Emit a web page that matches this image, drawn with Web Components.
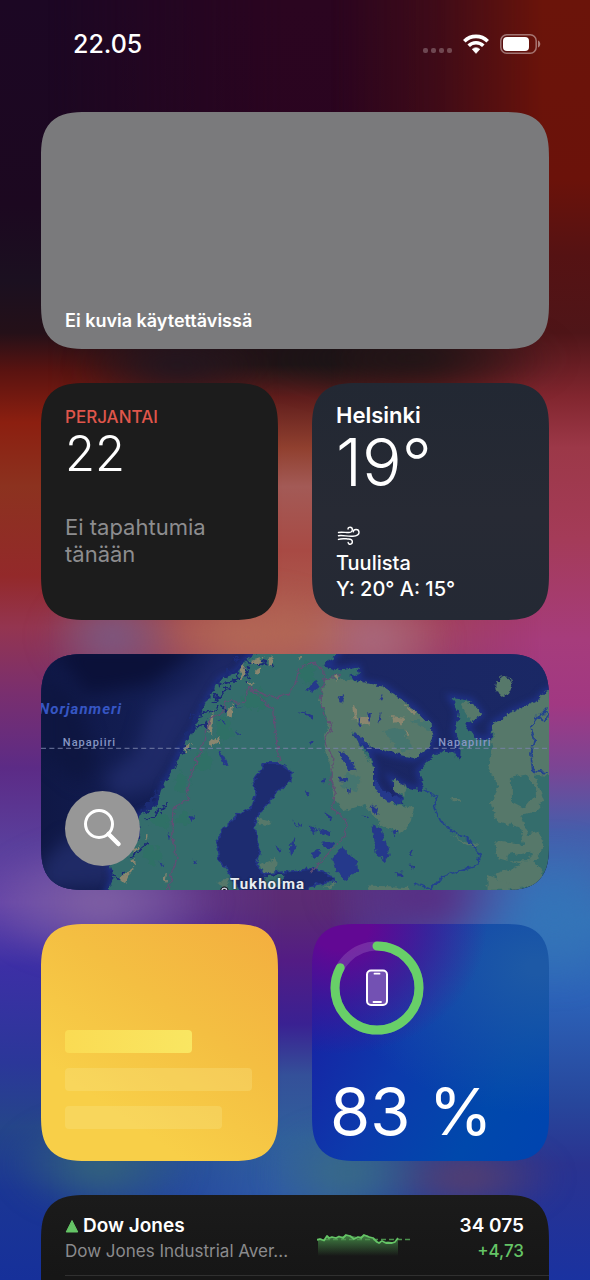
<!DOCTYPE html>
<html lang="fi">
<head>
<meta charset="utf-8">
<meta name="viewport" content="width=device-width, initial-scale=1">
<title>Widgetit</title>
<style>
  html, body { margin: 0; min-height: 100%; }
  body { font-family: Inter, "Liberation Sans", sans-serif; color: #fff; background: #1a0a24; }
</style>
</head>
<body>
<today-screen>
  <status-bar slot="status" time="22.05"></status-bar>
  <photos-widget wide>Ei kuvia käytettävissä</photos-widget>
  <calendar-widget day="perjantai" date="22">Ei tapahtumia tänään</calendar-widget>
  <weather-widget city="Helsinki" temp="19°" sky="Tuulista" range="Y: 20° A: 15°"></weather-widget>
  <map-widget wide></map-widget>
  <notes-widget></notes-widget>
  <battery-widget level="83"></battery-widget>
  <stocks-widget wide last></stocks-widget>
</today-screen>

<script>
const define = (name, render) => customElements.define(name, class extends HTMLElement {
  connectedCallback() {
    if (this.shadowRoot) return;
    this.attachShadow({ mode: 'open' }).innerHTML = render(this);
  }
});

define('today-screen', () => `
  <style>
    :host { display: flex; flex-direction: column; min-height: 100vh; position: relative; overflow: hidden; isolation: isolate; }
    .wall, .wall div { position: absolute; inset: 0; }
    .wall { z-index: -1; overflow: hidden;
      background: linear-gradient(#1c0724, #1c0820 16%, #1b1020 22%, #241018 26%, #5a1310 29%, #8c1f10 33%, #8c321f 38%, #93292a 45%, #943550 49%, #7a2f6e 54%, #5c2b86 60%, #5a3f9c 66%, #6746a8 70.5%, #3c2fa5 75.5%, #2b3799 83%, #25458a 88%, #1b3694 93%, #16309a); }
    .mid { background: linear-gradient(#2b0520, #2a0420 18%, #1e1016 26%, #1e1416 28.5%, #5f1d1c 31%, #90402f 35%, #a35a56 38%, #a84a44 43%, #b06254 49.5%, #983f70 56%, #5f2c74 68%, #5a2b74 71%, #531c84 75%, #3a2192 80%, #345099 84%, #30609c 89%, #2f5ba5 93%, #1d369c);
      -webkit-mask: linear-gradient(90deg, transparent 8%, #000 48%, #000 56%, transparent 90%); mask: linear-gradient(90deg, transparent 8%, #000 48%, #000 56%, transparent 90%); }
    .right { background: linear-gradient(#6b140a, #6b120a 14%, #551213 20%, #4f1518 26%, #82262f 31%, #9c3848 35%, #a43b58 42%, #a63c7c 50%, #a13882 55%, #7b4594 60%, #455eac 65%, #3474b8 72%, #2c62b8 78%, #27479c 86%, #2a3390 91%, #1a32a0);
      -webkit-mask: linear-gradient(90deg, transparent 56%, #0006 74%, #000 92%); mask: linear-gradient(90deg, transparent 56%, #0006 74%, #000 92%); }
    .wall .glow { filter: blur(12px); background:
      radial-gradient(ellipse 17% 3% at 30% 28.6%, #1f1722, #1f172200),
      radial-gradient(ellipse 26% 3.4% at 70% 28%, #1b1517, #1b151700),
      radial-gradient(ellipse 12% 4% at 19% 49.7%, #775a86, #775a8600),
      radial-gradient(ellipse 18% 4% at 42% 49.8%, #b36856, #b3685600),
      radial-gradient(ellipse 13% 4% at 63% 50%, #a86a80, #a86a8000),
      radial-gradient(ellipse 20% 5% at 17% 70.5%, #8062a4, #8062a400),
      radial-gradient(ellipse 18% 6% at 94% 71.5%, #3474b8, #3474b800),
      radial-gradient(ellipse 18% 4% at 72% 70%, #582a80, #582a8000),
      radial-gradient(ellipse 16% 4% at 17% 91%, #35667a, #35667a00),
      radial-gradient(ellipse 14% 4% at 59% 91.6%, #3a6c84, #3a6c8400),
      radial-gradient(ellipse 16% 3% at 79% 92%, #5c3f6a, #5c3f6a00); }
    main { display: grid; grid-template-columns: 1fr 1fr; grid-template-rows: auto auto auto auto 1fr; gap: 34px; padding: 0 41px; flex: 1; }
    ::slotted([wide]) { grid-column: 1 / -1; aspect-ratio: 508 / 237; }
    ::slotted(map-widget[wide]) { aspect-ratio: 508 / 236; }
    ::slotted([wide][last]) { aspect-ratio: auto; }
  </style>
  <div class="wall"><div class="mid"></div><div class="right"></div><div class="glow"></div></div>
  <slot name="status"></slot>
  <main><slot></slot></main>
`);

const card = `
  :host { display: flex; flex-direction: column; box-sizing: border-box; min-width: 0; border-radius: 38px; overflow: hidden; position: relative; aspect-ratio: 1; }
  @supports (corner-shape: superellipse(1.4)) { :host { border-radius: 46px; corner-shape: superellipse(1.5); } }
  p { margin: 0; }
`;

define('status-bar', el => `
  <style>
    :host { display: flex; align-items: center; justify-content: space-between; box-sizing: border-box; height: 112px; padding: 0 49px 24px 73px; }
    time { font-size: 25px; font-weight: 500; line-height: 32px; }
    .icons { display: flex; align-items: center; gap: 11px; }
    svg { display: block; }
  </style>
  <time>${el.getAttribute('time')}</time>
  <div class="icons">
    <svg width="30" height="20" viewBox="0 0 30 20" fill="#fff" fill-opacity=".25"><rect x="1" y="14" width="5" height="5" rx="2"/><rect x="9" y="14" width="5" height="5" rx="2"/><rect x="17" y="14" width="5" height="5" rx="2"/><rect x="25" y="14" width="5" height="5" rx="2"/></svg>
    <svg width="26" height="20" viewBox="0 0 26 20"><g fill="none" stroke="#fff" stroke-width="3.6"><path d="M1.300 7.200a16.600 16.600 0 0 1 23.400 0"/><path d="M5.700 11.700a10.400 10.400 0 0 1 14.600 0"/></g><path d="M9.200 15.200a5.400 5.400 0 0 1 7.600 0L13 19.400z" fill="#fff" stroke="#fff" stroke-width=".6"/></svg>
    <svg width="41" height="20" viewBox="0 0 41 20"><rect x=".8" y=".8" width="35.4" height="18.4" rx="6" fill="none" stroke="#fff" stroke-opacity=".42" stroke-width="1.5"/><rect x="3" y="3" width="26" height="14" rx="4" fill="#fff"/><path d="M38 6.500c3 1.200 3 5.800 0 7z" fill="#fff" fill-opacity=".45"/></svg>
  </div>
`);

define('photos-widget', () => `
  <style>${card}
    :host { background: #7a7a7c; justify-content: flex-end; padding: 0 24px 16px; }
    p { font-size: 18px; font-weight: 600; line-height: 24px; }
  </style>
  <p><slot></slot></p>
`);

define('calendar-widget', el => `
  <style>${card}
    :host { background: #1c1c1c; padding: 24px; }
    .day { color: #e0564b; font-size: 17px; font-weight: 500; line-height: 20px; text-transform: uppercase; }
    .date { font-size: 49px; font-weight: 300; line-height: 54px; }
    .none { margin-top: 33px; color: #8d8d8f; font-size: 22px; line-height: 27px; max-width: 170px; }
  </style>
  <p class="day">${el.getAttribute('day')}</p>
  <p class="date">${el.getAttribute('date')}</p>
  <p class="none"><slot></slot></p>
`);

define('weather-widget', el => `
  <style>${card}
    :host { background: linear-gradient(#222833, #272a34 55%, #242934); padding: 18px 24px; }
    .city { font-size: 22px; font-weight: 600; line-height: 28px; }
    .temp { font-size: 66px; font-weight: 300; line-height: 66px; }
    svg { display: block; margin-top: 30px; }
    .now { font-size: 20px; font-weight: 500; line-height: 26px; }
    .sky { margin-top: 4px; }
  </style>
  <p class="city">${el.getAttribute('city')}</p>
  <p class="temp">${el.getAttribute('temp')}</p>
  <svg width="26" height="22" viewBox="0 0 26 22" fill="none" stroke="#fff" stroke-width="1.5" stroke-linecap="round"><path d="M2 7.800c4-.9 8 .4 11 .1 2.600-.2 3.600-1.500 3.500-3.300C16.400 1.500 12 1.600 12 4.200"/><path d="M2 11.200c5-.9 9 1.100 15 .6 4.500-.4 6.600-1.800 6.500-4.300-.2-3.800-6-3.600-6.100-.3"/><path d="M2 15.100c4-1.500 7-.6 10.500-.4 2.500.1 4 1.100 4 2.900 0 3.200-4.200 3.200-4.400.7"/></svg>
  <p class="now sky">${el.getAttribute('sky')}</p>
  <p class="now">${el.getAttribute('range')}</p>
`);

define('map-widget', () => `
  <style>${card}
    :host { background: #1a2662; font-family: Roboto, sans-serif; }
    .chart { position: absolute; inset: 0; width: 100%; height: 100%; }
    filter { color-interpolation-filters: sRGB; }
    span { position: absolute; white-space: nowrap; font-weight: 500; }
    .sea { left: -2px; top: 47px; color: #3656c4; font-size: 15px; line-height: 16px; font-weight: 700; font-style: italic; letter-spacing: 1px; }
    .circle { top: 83px; color: #8796c4; font-size: 11px; line-height: 12px; letter-spacing: 1px; }
    .west { left: 4.3%; } .east { left: 78.2%; }
    .town { left: 37.2%; bottom: -3px; color: #e9edf3; font-size: 15px; line-height: 18px; font-weight: 700; letter-spacing: 1px; text-shadow: 0 0 2px #1a2646, 0 0 2px #1a2646; }
    button { margin: auto 0 24px 24px; width: 75px; height: 75px; padding: 0; border: 0; border-radius: 50%; background: #979797; position: relative; display: grid; place-items: center; }
  </style>
  <svg class="chart" viewBox="33 27 1521 711" preserveAspectRatio="xMidYMid slice" aria-hidden="true">
    <defs>
      <linearGradient id="sea"><stop stop-color="#0f1744"/><stop offset=".22" stop-color="#131e54"/><stop offset=".45" stop-color="#1b2562"/><stop offset="1" stop-color="#1a2865"/></linearGradient>
      <filter id="coast" x="-5%" y="-5%" width="110%" height="110%"><feTurbulence type="fractalNoise" baseFrequency=".06" numOctaves="3" seed="4"/><feDisplacementMap in="SourceGraphic" scale="20" xChannelSelector="R" yChannelSelector="G"/></filter>
      <filter id="fjord" x="-20%" y="-20%" width="140%" height="140%"><feTurbulence type="fractalNoise" baseFrequency=".05" numOctaves="3" seed="9"/><feDisplacementMap in="SourceGraphic" scale="46" xChannelSelector="R" yChannelSelector="G"/></filter>
      <filter id="soft"><feGaussianBlur stdDeviation="9"/></filter>
      <filter id="deep" x="-20%" y="-20%" width="140%" height="140%"><feGaussianBlur stdDeviation="26"/></filter>
      <path id="land" d="M225 760 250 700 242 660 295 620 330 570 325 515 385 480 400 425 430 375 458 310 495 250 515 200 540 155 572 105 620 85 650 45 700 10H930L905 45 875 62 930 78 980 70 985 90 955 98 995 115 1060 128 1110 165 1150 195 1198 245 1210 275 1190 315 1150 340 1090 328 1030 310 995 285 965 268 1015 330 1030 370 1030 420 1070 470 1118 482 1115 455 1085 405 1130 430 1182 440 1165 380 1200 345 1225 320 1270 325 1285 345 1287 300 1275 260 1285 200 1262 160 1320 170 1350 210 1330 225 1303 240 1330 280 1380 290 1385 240 1450 200 1520 170 1540 145 1600 120V760Z"/>
    </defs>
    <rect width="1600" height="800" fill="url(#sea)"/>
    <g filter="url(#deep)">
      <path d="M60 0H520L360 120 170 150Z" fill="#0b1139"/>
      <path d="M30 100 130 150 200 350 150 420 30 320Z" fill="#0e1641"/>
      <path d="M360 190 500 120 580 20 640 27 520 180 440 330 380 430 260 460 220 400 320 320Z" fill="#1f2a68"/>
      <path d="M33 660 110 580 230 600 330 500 250 720 33 738Z" fill="#1f2a66"/>
    </g>
    <g filter="url(#soft)"><use href="#land" fill="none" stroke="#20338c" stroke-width="18"/></g>
    <g filter="url(#fjord)"><path d="M250 740 250 680 330 560 360 480 400 425 430 375 458 310 495 250 515 200 560 140 590 95 650 50" fill="none" stroke="#1b2b74" stroke-width="14"/></g>
    <g filter="url(#coast)"><use href="#land" fill="#346d6c"/></g>
    <g filter="url(#fjord)" fill="none" stroke="#1c2b78" stroke-width="7">
      <path d="M540 170 600 130M560 120 630 100M600 90 650 70M620 40 660 110M490 250 540 235M450 320 480 310M350 530 410 480M640 50 720 60M300 640 350 600M250 700 290 690M480 220 580 190"/>
    </g>
    <g filter="url(#fjord)" fill="#2f7066">
      <ellipse cx="675" cy="165" rx="36" ry="32"/><ellipse cx="580" cy="250" rx="24" ry="40"/><ellipse cx="520" cy="350" rx="26" ry="30"/><ellipse cx="455" cy="420" rx="20" ry="30"/><ellipse cx="390" cy="530" rx="28" ry="20"/><ellipse cx="365" cy="630" rx="26" ry="30"/><ellipse cx="830" cy="90" rx="24" ry="30"/><ellipse cx="460" cy="520" rx="20" ry="22"/>
    </g>
    <g filter="url(#coast)" fill="#56786a">
      <path d="M890 100 990 112 1060 128 1110 165 1150 195 1198 245 1210 275 1190 315 1150 340 1090 328 1030 310 960 260 1030 370 1030 430 1090 480 1150 490 1140 530 1110 570 1050 540 1000 480 940 500 910 470 900 380 880 290 895 220 865 170Z"/>
      <path d="M1385 240 1450 200 1520 170 1540 145 1600 120V400L1510 390 1540 470 1500 520 1540 600 1510 650 1560 720 1420 735 1390 690 1470 660 1400 640 1390 590 1480 600 1470 550 1400 530 1380 480 1400 420 1370 370 1385 300Z"/>
      <path d="M1290 180 1320 170 1350 210 1320 230Z M1090 400 1130 430 1120 450 1090 440Z"/>
      <ellipse cx="1420" cy="125" rx="24" ry="30"/>
      <path d="M680 520 720 530 712 545 688 540Z M690 660 740 640 735 680 700 690Z M1260 575 1340 600 1330 610Z M560 715 600 700 590 730Z M880 725 920 710 900 735Z M1010 725 1140 730 1130 745H1010Z M1370 690 1480 735H1370Z M1265 460H1290V470H1265Z"/>
    </g>
    <g filter="url(#coast)" fill="#346d6c">
      <path d="M1440 400 1490 390 1520 440 1480 490 1440 470Z M1470 510 1530 500V560L1490 570Z M1430 630 1510 620 1490 650H1430Z"/>
      <path d="M1060 260 1110 250 1150 310 1110 325Z M1140 230 1200 230 1200 260Z M950 380 990 400 980 440 930 430Z" fill="#45756f"/>
    </g>
    <g filter="url(#coast)" fill="#8a866f">
      <path d="M630 65 645 60 640 100 630 105Z M660 50 700 40 690 55 665 60Z M715 40 730 35 725 60 715 65Z M590 195 608 180 604 220 590 215Z M530 240 550 195 545 270 535 265Z M535 295 570 275 560 295 540 305Z M460 310 482 295 478 312 462 322Z M650 115 675 118 660 128Z M270 700 310 665 285 715Z M310 610 330 600 315 625Z M300 645 310 640 315 660Z M345 570 352 568 350 590Z M395 700 410 690 405 715Z M560 290 566 280 572 300Z M675 80 690 70 685 95Z"/>
      <path d="M990 220 1020 215 1015 240 988 235Z M1080 215 1120 220 1115 240 1085 230Z M1120 180 1155 200 1150 212Z M965 190 974 180 980 230 972 225Z M912 95 925 92 920 110Z M1125 260 1135 270 1125 275Z M800 40 812 38 808 52Z"/>
    </g>
    <g filter="url(#coast)" fill="#1d2c70">
      <path d="M700 355 745 355 785 382 780 412 742 440 700 490 672 530 680 590 690 620 678 660 700 690 760 682 850 672 900 690 915 710 850 720 820 745H640L600 690 568 650 558 600 580 548 620 512 660 490 680 440 668 410 690 380Z" stroke="#233689" stroke-width="5"/>
      <path d="M700 695 760 690 750 725 710 730Z" fill="#346d6c"/>
    </g>
    <g filter="url(#coast)" fill="#25398b">
      <path d="M905 640 932 605 980 650 982 680 945 707 915 680Z M1025 540 1052 555 1078 630 1062 652 1035 625 1030 580Z M1030 400 1060 440 1120 465 1110 480 1070 470 1035 440Z M1095 683 1122 685 1118 696 1098 694Z M1135 620 1146 618 1142 636Z M1140 655 1150 665 1146 680Z M1085 560 1096 562 1092 580Z"/>
      <path d="M840 115 860 110 868 125 845 142 830 135Z M924 160 945 152 935 178Z M1045 165 1060 145 1052 165Z M1010 205 1022 210 1015 235Z M980 245 992 218 990 240Z M1040 235 1050 205 1048 225Z M970 265 1000 280 1010 300 985 300Z M920 320 945 325 965 355 975 380 955 375Z M920 400 950 400 948 410 925 415Z M946 430 958 432 956 450Z M1020 480 1045 490 1042 510 1022 500Z M995 510 1015 515 1010 520Z M835 295 843 290 842 306Z M880 400 885 412 873 418Z M818 440 840 445 828 456Z M805 200 850 210 845 220Z"/>
      <path d="M562 318 580 335 592 360 580 362 570 340Z M478 515 493 516 488 532 480 525Z M385 650 400 658 402 668 390 662Z M412 565 420 570 416 590Z M490 645 500 648 500 658 490 655Z M785 520 800 540 808 552 795 540Z M790 580 795 600 782 635 778 610Z M735 600 750 612 745 628Z M885 500 908 515 905 528 890 520Z M838 540 855 550 850 570 840 555Z M860 550 900 560 895 575 870 565Z M875 590 910 595 905 610 880 610Z M840 625 870 615 865 635 845 640Z M800 530 815 540 812 550Z M560 222 592 240 578 238Z M600 175 635 190 620 188Z M612 260 632 272 622 272Z"/>
    </g>
    <g filter="url(#coast)" fill="none">
      <path d="M412 738 425 690 440 640 425 570 428 490 475 465 470 430 490 370 515 310 540 220 580 205 585 170 640 175 655 130 700 150 740 160 770 150 795 120 805 70 845 55 880 80 880 110 930 90M655 130 700 170 730 200 735 270 748 355M880 110 870 160 880 210 905 240 882 290 910 340 900 410 915 440 905 490 948 530 940 575 895 625 840 685" stroke="#614f74" stroke-width="4"/>
      <path d="M1180 438 1220 455 1210 490 1230 530 1280 570 1310 580 1350 635 1340 660 1280 680 1230 700 1200 735 1150 715M1554 205 1525 210 1500 245 1510 285 1500 330 1505 380 1550 385M1520 745 1560 690M1550 190 1520 220 1540 230 1554 210" stroke="#23438e" stroke-width="5"/>
    </g>
    <path d="M33 312H1554" stroke="#7882a8" stroke-opacity=".75" stroke-width="4" stroke-dasharray="15 10"/>
    <g fill="none" stroke="#0d1018" stroke-width="3"><circle cx="582" cy="738" r="11" fill="#ccd"/><circle cx="582" cy="738" r="4"/></g>
  </svg>
  <span class="sea">Norjanmeri</span>
  <span class="circle west">Napapiiri</span>
  <span class="circle east">Napapiiri</span>
  <span class="town">Tukholma</span>
  <button type="button" aria-label="Etsi kartalta"><svg width="40" height="40" viewBox="0 0 40 40" fill="none" stroke="#fff" stroke-linecap="round"><circle cx="16" cy="15" r="13.500" stroke-width="3"/><path d="M25.500 25 35.500 35" stroke-width="4.500"/></svg></button>
`);

define('notes-widget', () => `
  <style>${card}
    :host { background: linear-gradient(35deg, #f8cf48 25%, #f4bf42 60%, #f3ae3f); justify-content: flex-end; gap: 15px; padding: 0 24px 32px; }
    i { height: 23px; border-radius: 4px; background: #f9ea90; opacity: .28; width: 83%; }
    i:nth-of-type(1) { width: 67%; opacity: 1; background: linear-gradient(90deg, #fadb53, #f9e662); }
    i:nth-of-type(2) { width: 99%; }
  </style>
  <i></i><i></i><i></i>
`);

define('battery-widget', el => {
  const level = Number(el.getAttribute('level'));
  return `
  <style>${card}
    :host { background:
      radial-gradient(ellipse 62% 55% at 12% 0, #620894 20%, #4b1294a0 60%, #3a1a9400),
      radial-gradient(ellipse 85% 62% at 95% 18%, #1d59a6 5%, #1c56a600),
      linear-gradient(120deg, #1c18a0, #0c3aac 45%, #0048ac 75%, #0044b0);
      justify-content: space-between; padding: 17px 18px 9px; }
    svg { display: block; }
    p { font-size: 65px; font-weight: 400; line-height: 80px; white-space: nowrap; }
  </style>
  <svg width="94" height="94" viewBox="0 0 94 94" fill="none">
    <g stroke-width="9" stroke-linecap="round" transform="rotate(-90 47 47)"><circle cx="47" cy="47" r="42" stroke="#fff" stroke-opacity=".14"/><circle cx="47" cy="47" r="42" stroke="#68cf68" pathLength="100" stroke-dasharray="${level} 100"/></g>
    <rect x="37" y="29.500" width="20" height="34.500" rx="4" fill="#7351b3" stroke="#fff" stroke-width="2"/>
    <path d="M44.500 32.700h5M43.500 61h7.500" stroke="#fff" stroke-width="1.800" stroke-linecap="round"/>
  </svg>
  <p>${level} %</p>`;
});

define('stocks-widget', () => `
  <style>${card}
    :host { background: linear-gradient(#1b1b1b, #161616 80px); border-bottom-left-radius: 0; border-bottom-right-radius: 0; padding: 18px 0 0 24px; }
    .row { display: grid; grid-template-columns: 226px 1fr auto; align-items: center; column-gap: 26px; padding: 0 25px 12px 0; border-bottom: 1px solid #303030; }
    .name { display: flex; align-items: center; gap: 4px; }
    .name, .price { font-size: 19px; font-weight: 600; line-height: 26px; }
    .full, .change { font-size: 17px; font-weight: 400; line-height: 24px; }
    .full { color: #8b8b8d; white-space: nowrap; }
    .change { color: #65c466; font-weight: 500; }
    .quote { text-align: right; }
    svg { display: block; }
    .label { min-width: 0; }
  </style>
  <div class="row">
    <div class="label">
      <p class="name"><svg width="14" height="14" viewBox="0 0 14 14"><path d="M7 1.500 12.800 13H1.200z" fill="#65c466" stroke="#65c466" stroke-linejoin="round"/></svg>Dow Jones</p>
      <p class="full">Dow Jones Industrial Aver...</p>
    </div>
    <svg width="98" height="40" viewBox="0 -10 98 40" fill="none">
      <defs><linearGradient id="fade" x2="0" y2="1"><stop stop-color="#4fa452" stop-opacity=".75"/><stop offset="1" stop-color="#4fa452" stop-opacity="0"/></linearGradient></defs>
      <path d="M1 12 8 12 11 9 22 9 31 7 40 9 50 7 58 12 64 15 71 13 78 15 81 12V28H1z" fill="url(#fade)"/>
      <path d="M0 11.500H96" stroke="#4b914d" stroke-width="1.500" stroke-dasharray="5 3"/>
      <path d="M0 12 3 11 7 12.500 10 8 12 10 15 9 19 10 22 8.500 26 10 29 7 33 8 37 11 41 9 44 10 47 7 52 9 56 10 60 14 62 15 65 13 69 15 75 15 78 14 81 10" stroke="#65c466" stroke-width="1.800" stroke-linejoin="round"/>
    </svg>
    <div class="quote">
      <p class="price">34 075</p>
      <p class="change">+4,73</p>
    </div>
  </div>
`);
</script>
</body>
</html>
